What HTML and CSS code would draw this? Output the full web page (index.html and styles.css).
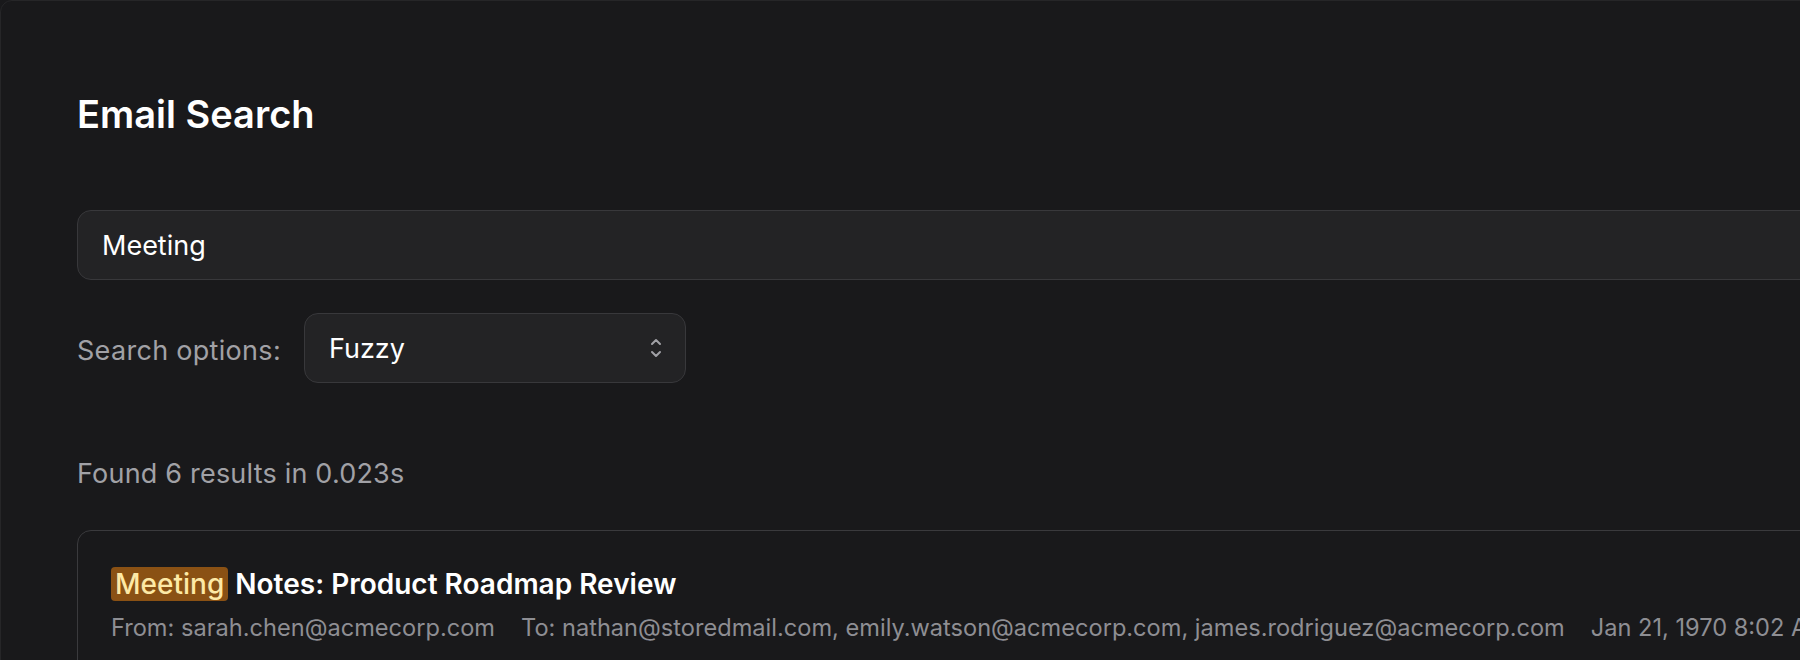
FILE: index.html
```html
<!DOCTYPE html>
<html lang="en">
<head>
<meta charset="utf-8">
<title>Email Search</title>
<link rel="stylesheet" href="styles.css">
</head>
<body>
<div class="app">
  <h1 class="title">Email Search</h1>
  <div class="search-box">Meeting</div>
  <div class="options">
    <span class="options-label">Search options:</span>
    <div class="select">
      <span>Fuzzy</span>
      <svg class="chevrons" width="14" height="24" viewBox="0 0 14 24" fill="none" stroke="currentColor" stroke-width="2" stroke-linecap="round" stroke-linejoin="round"><path d="M3 8l4-4 4 4"/><path d="M3 16l4 4 4-4"/></svg>
    </div>
  </div>
  <p class="summary">Found 6 results in 0.023s</p>
  <div class="result">
    <div class="result-title"><mark class="hl">Meeting</mark> Notes: Product Roadmap Review</div>
    <div class="meta">
      <span>From: sarah.chen@acmecorp.com</span>
      <span>To: nathan@storedmail.com, emily.watson@acmecorp.com, james.rodriguez@acmecorp.com</span>
      <span>Jan 21, 1970 8:02 AM</span>
    </div>
  </div>
</div>
</body>
</html>
```
FILE: styles.css
```css
html, body {
  margin: 0;
  padding: 0;
  background: #19191b;
  overflow: hidden;
}
body {
  font-family: Inter, "Liberation Sans", sans-serif;
  color: #f4f4f5;
}
.app {
  width: 2300px;
  min-height: 760px;
  box-sizing: border-box;
  background: #19191b;
  border: 1px solid #262628;
  border-radius: 12px;
  padding: 90px 76px;
}
.title {
  margin: 0;
  font-size: 38px;
  line-height: 46px;
  font-weight: 600;
  color: #ffffff;
}
.search-box {
  margin-top: 73px;
  height: 70px;
  box-sizing: border-box;
  border: 1px solid #38383b;
  border-radius: 14px;
  background: #232325;
  padding: 0 24px;
  display: flex;
  align-items: center;
  font-size: 27px;
  color: #ffffff;
}
.options {
  margin-top: 33px;
  display: flex;
  align-items: center;
  gap: 23px;
}
.options-label {
  font-size: 27px;
  letter-spacing: 0.3px;
  color: #a1a1a6;
  margin-top: 4px;
}
.select {
  width: 382px;
  height: 70px;
  box-sizing: border-box;
  border: 1px solid #38383b;
  border-radius: 14px;
  background: #232325;
  padding: 0 24px;
  display: flex;
  align-items: center;
  justify-content: space-between;
  font-size: 27px;
  color: #ffffff;
}
.chevrons {
  color: #a1a1a6;
  margin-right: -2px;
}
.summary {
  margin: 75px 0 0;
  font-size: 27px;
  letter-spacing: 0.2px;
  line-height: 32px;
  color: #a1a1a6;
}
.result {
  margin-top: 40px;
  border: 1px solid #3a3a3d;
  border-radius: 14px;
  padding: 36px 33px 40px;
}
.result-title {
  font-size: 28px;
  line-height: 34px;
  font-weight: 600;
  color: #ffffff;
}
.hl {
  background: #8a5114;
  color: #fde9a6;
  border-radius: 4px;
  padding: 0 4px;
  font-weight: 500;
}
.meta {
  margin-top: 12px;
  display: flex;
  gap: 26px;
  font-size: 23.6px;
  line-height: 30px;
  color: #8e8e93;
  white-space: nowrap;
}
```
